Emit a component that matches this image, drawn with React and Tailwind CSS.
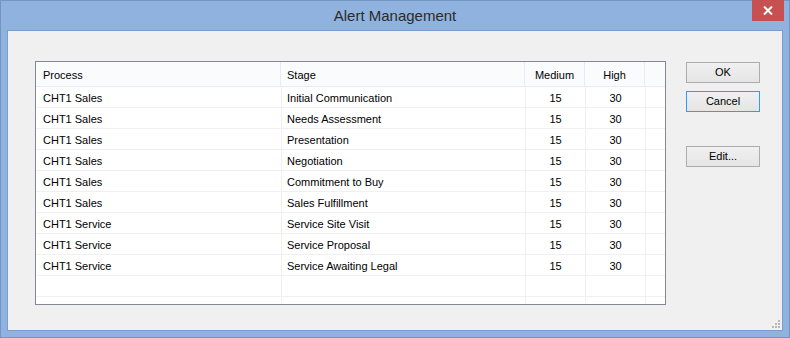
import React from "react";

const rows = [
  ["CHT1 Sales", "Initial Communication"],
  ["CHT1 Sales", "Needs Assessment"],
  ["CHT1 Sales", "Presentation"],
  ["CHT1 Sales", "Negotiation"],
  ["CHT1 Sales", "Commitment to Buy"],
  ["CHT1 Sales", "Sales Fulfillment"],
  ["CHT1 Service", "Service Site Visit"],
  ["CHT1 Service", "Service Proposal"],
  ["CHT1 Service", "Service Awaiting Legal"],
  ["", "", "", ""],
  ["", "", "", ""],
];

function Row({ r }) {
  const filled = r[0] !== "";
  return (
    <div className="flex h-[21px] shrink-0 border-b border-[#f0f0f0] leading-[20px]">
      <div className="w-[246px] shrink-0 border-r border-[#f0f0f0] pl-[7px] pt-[1px]">{r[0]}</div>
      <div className="w-[244px] shrink-0 border-r border-[#f0f0f0] pl-[5px] pt-[1px]">{r[1]}</div>
      <div className="w-[60px] shrink-0 border-r border-[#f0f0f0] text-center pt-[1px]">{filled ? "15" : ""}</div>
      <div className="w-[60px] shrink-0 border-r border-[#f0f0f0] text-center pt-[1px]">{filled ? "30" : ""}</div>
      <div className="flex-1" />
    </div>
  );
}

function Btn({ children, focus, className = "" }) {
  return (
    <div
      className={
        "w-[74px] h-[21px] flex items-center justify-center border bg-gradient-to-b from-[#f0f0f0] to-[#e5e5e5] text-[11px] text-black " +
        (focus ? "border-[#3399ff] " : "border-[#acacac] ") +
        className
      }
    >
      {children}
    </div>
  );
}

export default function App() {
  return (
    <div
      className="w-[790px] h-[338px] bg-[#8fb3de] border border-[#7395c6] flex flex-col"
      style={{ fontFamily: '"Liberation Sans", Arial, sans-serif' }}
    >
      <div className="relative h-[29px] shrink-0 flex items-center justify-center">
        <span className="text-[15px] text-[#2b2b2b] pt-[1px]">Alert Management</span>
        <div className="absolute right-[5px] top-[-1px] w-[32px] h-[21px] bg-[#c75050] flex items-center justify-center">
          <svg width="10" height="9" viewBox="0 0 10 9">
            <path d="M1 0.5 L9 8.5 M9 0.5 L1 8.5" stroke="#ffffff" strokeWidth="2" />
          </svg>
        </div>
      </div>
      <div className="relative mx-[6px] mb-[6px] flex-1 border border-[#7a9dce] bg-[#f0f0f0] flex pl-[27px] pt-[30px]">
        <div className="w-[631px] h-[244px] border border-[#828790] bg-white flex flex-col overflow-hidden text-[11px] text-black">
          <div className="flex h-[25px] shrink-0 border-b border-[#e4ecf7] bg-[#fafbfc] leading-[24px]">
            <div className="w-[245px] shrink-0 border-r border-[#e4ecf7] pl-[7px] pt-[1px]">Process</div>
            <div className="w-[244px] shrink-0 border-r border-[#e4ecf7] pl-[6px] pt-[1px]">Stage</div>
            <div className="w-[60px] shrink-0 border-r border-[#e4ecf7] text-center pt-[1px]">Medium</div>
            <div className="w-[60px] shrink-0 border-r border-[#e4ecf7] text-center pt-[1px]">High</div>
            <div className="flex-1" />
          </div>
          {rows.map((r, i) => (
            <Row key={i} r={r} />
          ))}
        </div>
        <div className="ml-[20px] pt-[1px] flex flex-col">
          <Btn>OK</Btn>
          <Btn focus className="mt-[8px]">Cancel</Btn>
          <Btn className="mt-[34px]">Edit...</Btn>
        </div>
        <svg className="absolute right-[2px] bottom-[2px]" width="8" height="8" viewBox="0 0 8 8">
          <rect x="6" y="0" width="2" height="2" fill="#b8b8b8" />
          <rect x="3" y="3" width="2" height="2" fill="#b8b8b8" />
          <rect x="6" y="3" width="2" height="2" fill="#b8b8b8" />
          <rect x="0" y="6" width="2" height="2" fill="#b8b8b8" />
          <rect x="3" y="6" width="2" height="2" fill="#b8b8b8" />
          <rect x="6" y="6" width="2" height="2" fill="#b8b8b8" />
        </svg>
      </div>
    </div>
  );
}
